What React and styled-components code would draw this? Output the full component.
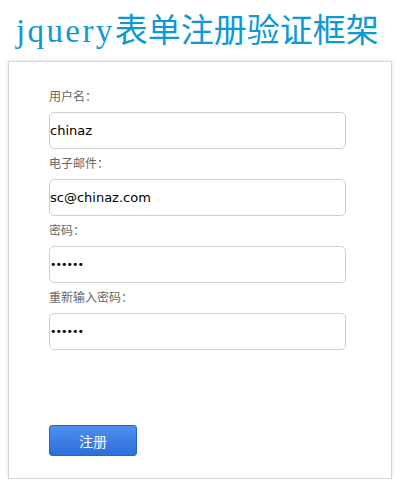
import React from 'react'
import styled, { createGlobalStyle } from 'styled-components'

const GlobalStyle = createGlobalStyle`
    body {
        margin: 0;
        background: #fff;
        font-family: "Liberation Sans", "Noto Sans CJK SC", sans-serif;
    }
`;

const Page = styled.div`
    width: 415px;
    padding: 0 8px;
    box-sizing: border-box;
`;

const Title = styled.h1`
    margin: 0;
    height: 61px;
    padding: 9px 0 0 8px;
    box-sizing: border-box;
    font-family: "Noto Sans CJK SC", sans-serif;
    font-weight: normal;
    font-size: 33px;
    line-height: 38px;
    color: #0d99d6;
    white-space: nowrap;
`;

// the latin part is a serif face, spaced out to the half-width of the CJK glyphs
const Latin = styled.span`
    font-family: "Liberation Serif", serif;
    font-size: 33px;
    letter-spacing: 2.4px;
`;

const Panel = styled.form`
    width: 384px;
    height: 418px;
    box-sizing: border-box;
    border: 1px solid #d6d6d6;
    box-shadow: 0 0 4px rgba(0, 0, 0, 0.12);
    padding: 26px 0 0 40px;
    display: flex;
    flex-direction: column;
`;

const Field = styled.div`
    display: flex;
    flex-direction: column;
    gap: 6px;
    margin-bottom: 6px;
`;

const Label = styled.label`
    font-size: 12px;
    line-height: 18px;
    color: #666;
`;

const Input = styled.input`
    width: 297px;
    height: 37px;
    box-sizing: border-box;
    border: 1px solid #cfcfcf;
    border-radius: 5px;
    padding: 0;
    font-family: "DejaVu Sans", "Liberation Sans", sans-serif;
    font-size: ${props => (props.type === 'password' ? '11px' : '13px')};
    color: #000;
    outline: none;
    letter-spacing: ${props => (props.type === 'password' ? '-1px' : '0')};
`;

const Submit = styled.button`
    margin-top: 69px;
    width: 88px;
    height: 31px;
    border: 1px solid #2b63c8;
    border-radius: 3px;
    background: linear-gradient(#4f8ff0, #2d6fdb);
    color: #fff;
    font-family: "Noto Sans CJK SC", sans-serif;
    font-size: 14px;
    cursor: pointer;
`;

const fields = [
    { label: '用户名：', type: 'text', value: 'chinaz' },
    { label: '电子邮件：', type: 'text', value: 'sc@chinaz.com' },
    { label: '密码：', type: 'password', value: '123456' },
    { label: '重新输入密码：', type: 'password', value: '123456' },
];

const App = () => {
    return (
        <Page>
            <GlobalStyle />
            <Title><Latin>jquery</Latin>表单注册验证框架</Title>
            <Panel onSubmit={e => e.preventDefault()}>
                {fields.map(f => (
                    <Field key={f.label}>
                        <Label>{f.label}</Label>
                        <Input type={f.type} defaultValue={f.value} />
                    </Field>
                ))}
                <Submit type="submit">注册</Submit>
            </Panel>
        </Page>
    )
}

export default App
